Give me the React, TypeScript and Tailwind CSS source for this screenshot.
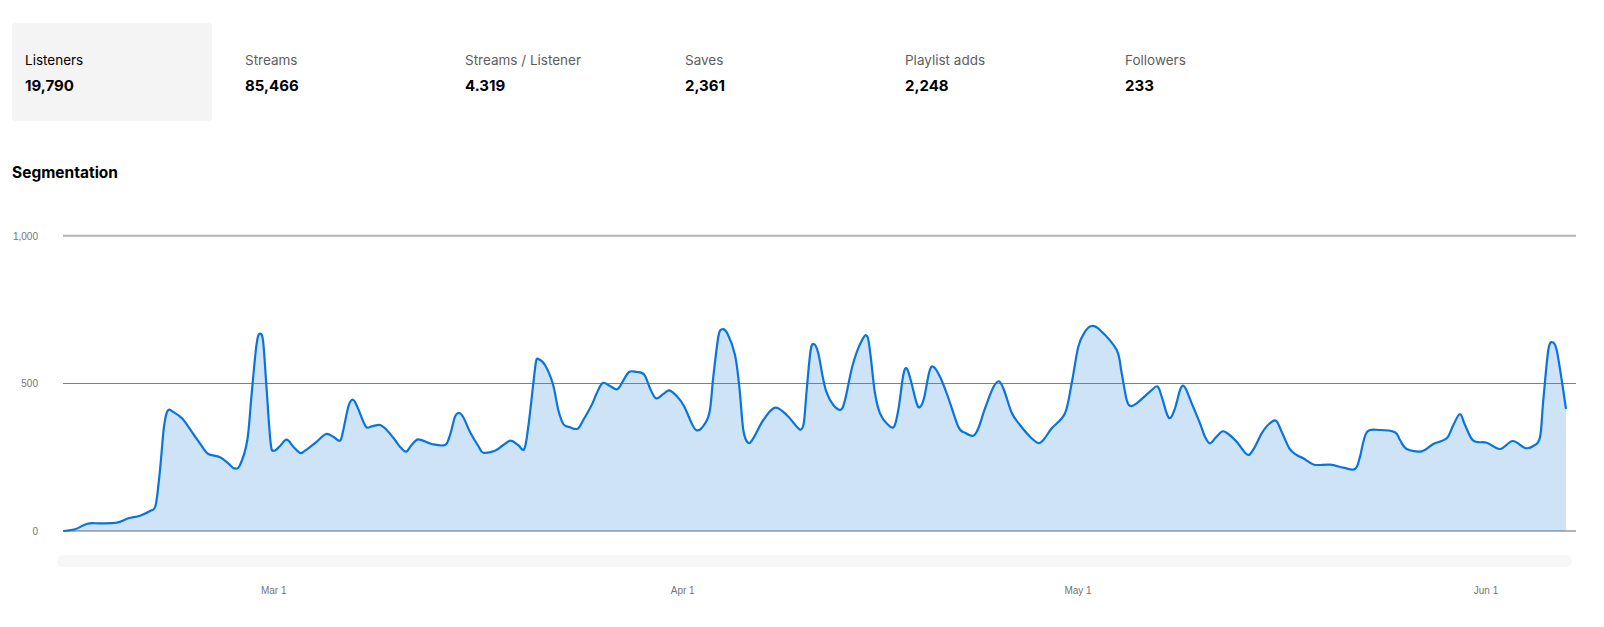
const stats = [
  { label: "Listeners", value: "19,790", active: true },
  { label: "Streams", value: "85,466" },
  { label: "Streams / Listener", value: "4.319" },
  { label: "Saves", value: "2,361" },
  { label: "Playlist adds", value: "2,248" },
  { label: "Followers", value: "233" },
];

// curve traced from the chart, in pixels at 3x, each run with its own origin
const runs: { ox: number; oy: number; pts: number[] }[] = [
  {
    ox: 0,
    oy: 210,
    pts: [190,963,225,958,262,941,300,940,350,938,385,925,420,917,450,903,467,885,480,780,492,650,503,602,520,606,548,627,580,672,610,715,625,732,660,742,685,760,703,775,720,765,742,690,755,550,770,400,781,371,790,400,800,540,812,700,822,722,840,708,860,689,880,710,900,729,915,722,950,695,978,672,1000,680,1020,692,1030,660,1045,590,1058,569,1072,590,1097,649,1115,649,1140,645,1160,660,1185,690],
  },
  {
    ox: 400,
    oy: 300,
    pts: [0,440,18,455,35,435,55,418,95,432,135,435,150,405,165,350,177,339,190,352,212,400,235,438,250,458,285,452,310,435,332,422,355,436,373,447,385,380,400,250,408,185,415,177,435,195,458,250,475,330,490,372,510,382,533,386,550,360,575,315,590,280,608,249,630,258,652,268,668,245,687,216,710,216,733,224,750,265,768,295,790,282,808,271,830,288,852,318,875,370,888,390,905,384,928,340,940,230,955,110,966,88,982,100,1005,165,1018,260,1030,390,1044,428,1060,415,1090,360,1125,323,1160,345],
  },
  {
    ox: 800,
    oy: 300,
    pts: [-8,382,4,388,12,365,20,270,32,150,43,133,55,160,68,230,80,278,100,315,122,329,135,300,158,195,185,122,202,109,212,170,225,280,240,340,262,372,282,380,295,330,310,225,320,205,332,240,350,310,360,321,372,295,388,215,400,200,420,230,442,285,475,380,495,398,520,407,535,385,555,325,580,262,597,244,612,270,635,338,660,375,690,410,715,429,730,420,755,385,795,340,815,250,835,140,855,95,875,78,900,90,950,150,965,220,980,300,992,318,1010,310,1050,275,1072,259,1085,290,1102,345,1112,353,1125,325,1142,265,1155,262,1175,310],
  },
  {
    ox: 1200,
    oy: 300,
    pts: [0,370,15,410,30,430,48,412,68,394,85,402,110,425,135,458,148,464,165,440,185,400,207,372,228,362,245,395,268,445,290,465,310,475,342,494,390,494,430,503,465,507,480,470,500,397,540,390,585,397,600,420,620,447,665,454,700,432,740,415,760,375,780,342,795,375,820,422,860,428,900,447,938,423,975,444,1000,438,1020,412,1030,300,1045,150,1058,127,1070,150,1085,240,1098,327],
  },
];

const points: [number, number][] = runs.flatMap(({ ox, oy, pts }) => {
  const out: [number, number][] = [];
  for (let i = 0; i < pts.length; i += 2) {
    out.push([ox + pts[i] / 3, oy + pts[i + 1] / 3]);
  }
  return out;
});

function smooth(p: [number, number][]) {
  let d = `M${p[0][0].toFixed(1)} ${p[0][1].toFixed(1)}`;
  for (let i = 0; i < p.length - 1; i++) {
    const a = p[Math.max(i - 1, 0)];
    const b = p[i];
    const c = p[i + 1];
    const e = p[Math.min(i + 2, p.length - 1)];
    const c1x = b[0] + (c[0] - a[0]) / 6;
    const c1y = b[1] + (c[1] - a[1]) / 6;
    const c2x = c[0] - (e[0] - b[0]) / 6;
    const c2y = c[1] - (e[1] - b[1]) / 6;
    d += `C${c1x.toFixed(1)} ${c1y.toFixed(1)} ${c2x.toFixed(1)} ${c2y.toFixed(1)} ${c[0].toFixed(1)} ${c[1].toFixed(1)}`;
  }
  return d;
}

const PLOT_TOP = 211;
const line = smooth(points);
const first = points[0];
const last = points[points.length - 1];
const area = `${line}L${last[0].toFixed(1)} 531L${first[0].toFixed(1)} 531Z`;

const axisFont = "'Liberation Sans', Arial, sans-serif";

function yOf(y: number) {
  return y - PLOT_TOP;
}

export default function App() {
  return (
    <div className="w-[1604px] h-[627px] overflow-hidden bg-white font-['Inter',sans-serif] text-black">
      <div className="flex gap-5 pl-3 pt-[23px]">
        {stats.map((s) => (
          <div
            key={s.label}
            className={
              s.active
                ? "w-[200px] h-[98px] rounded bg-[#f4f4f4] px-[13px] pt-[27px]"
                : "w-[200px] h-[98px] rounded px-[13px] pt-[27px]"
            }
          >
            <div className={s.active ? "text-[13.5px] leading-5 text-black" : "text-[13.5px] leading-5 text-[#5e5e5e]"}>{s.label}</div>
            <div className="mt-[6px] text-[15px] leading-5 font-bold">{s.value}</div>
          </div>
        ))}
      </div>

      <h2 className="mt-[42px] pl-3 text-[15.5px] leading-5 font-bold">Segmentation</h2>

      <svg className="block mt-[28px]" width={1604} height={335} style={{ fontFamily: axisFont }}>
        <line x1={63} x2={1576} y1={yOf(235.7)} y2={yOf(235.7)} stroke="#b3b3b3" strokeWidth={2} />
        <line x1={63} x2={1576} y1={yOf(531)} y2={yOf(531)} stroke="#b3b3b3" strokeWidth={2} />
        <g fontSize={10} fill="#757575" textAnchor="end">
          <text x={38} y={yOf(240)}>1,000</text>
          <text x={38} y={yOf(387)}>500</text>
          <text x={38} y={yOf(535)}>0</text>
        </g>
        <path d={area} transform={`translate(0 ${-PLOT_TOP})`} fill="#0d72d9" fillOpacity={0.2} />
        <line x1={63} x2={1576} y1={yOf(383.5)} y2={yOf(383.5)} stroke="#808080" strokeWidth={1} />
        <path d={line} transform={`translate(0 ${-PLOT_TOP})`} fill="none" stroke="#0a74de" strokeWidth={2.2} />
      </svg>

      <div className="ml-[57px] mt-[9px] h-3 w-[1515px] rounded-md bg-[#f7f7f7]" />

      <svg className="block mt-[16px]" width={1604} height={16} style={{ fontFamily: axisFont }}>
        <g fontSize={10} fill="#757575" textAnchor="middle">
          <text x={273.7} y={11}>Mar 1</text>
          <text x={682.7} y={11}>Apr 1</text>
          <text x={1078} y={11}>May 1</text>
          <text x={1486} y={11}>Jun 1</text>
        </g>
      </svg>
    </div>
  );
}
